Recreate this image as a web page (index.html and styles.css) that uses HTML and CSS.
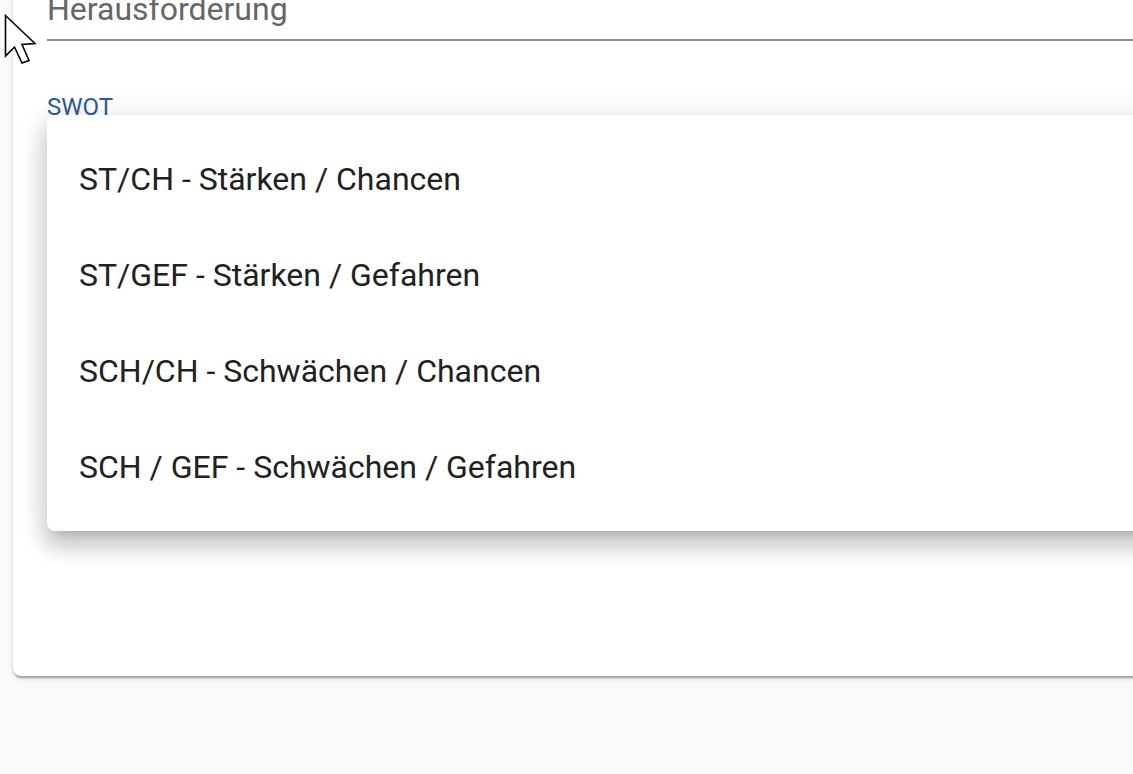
FILE: index.html
```html
<!DOCTYPE html>
<html lang="de">
<head>
<meta charset="utf-8">
<title>SWOT</title>
<link rel="stylesheet" href="styles.css">
</head>
<body>
<div class="card">
  <div class="field">
    <div class="field-input">Herausforderung</div>
  </div>
  <div class="select-field">
    <div class="select-label">SWOT</div>
  </div>
</div>
<ul class="menu">
  <li class="menu-item">ST/CH - Stärken / Chancen</li>
  <li class="menu-item">ST/GEF - Stärken / Gefahren</li>
  <li class="menu-item">SCH/CH - Schwächen / Chancen</li>
  <li class="menu-item">SCH / GEF - Schwächen / Gefahren</li>
</ul>
<svg class="cursor" width="40" height="72" viewBox="0 0 40 72">
  <polygon points="5.5,15.5 5.5,56 14.5,47 22,63 29,60.5 22,44.5 35,43.5" fill="#fff" stroke="#000" stroke-width="1.6" stroke-linejoin="miter"/>
</svg>
</body>
</html>
```
FILE: styles.css
```css
html, body {
  margin: 0;
  padding: 0;
  background: #fafafa;
  font-family: Roboto, "Liberation Sans", Arial, sans-serif;
  overflow: hidden;
}
body {
  width: 1133px;
  height: 774px;
  position: relative;
}
.card {
  margin: -42px -30px 0 13px;
  padding-top: 32px;
  height: 686px;
  background: #fff;
  border-radius: 8px;
  box-shadow: 0 4px 2px -2px rgba(0,0,0,0.2), 0 2px 2px 0 rgba(0,0,0,0.14), 0 2px 6px 0 rgba(0,0,0,0.12);
}
.field {
  padding-left: 34px;
}
.field-input {
  font-size: 32px;
  line-height: 38px;
  color: #666;
  padding-bottom: 11px;
  border-bottom: 2px solid #8a8a8a;
}
.select-field {
  padding-left: 34px;
  margin-top: 54px;
}
.select-label {
  font-size: 24px;
  line-height: 24px;
  color: #2f5a9e;
}
.menu {
  position: absolute;
  left: 47px;
  top: 115px;
  right: -30px;
  margin: 0;
  padding: 16px 0;
  list-style: none;
  background: #fff;
  border-radius: 8px;
  box-shadow: 0 10px 10px -10px rgba(0,0,0,0.2), 0 16px 20px 2px rgba(0,0,0,0.14), 0 6px 28px 4px rgba(0,0,0,0.12);
}
.menu-item {
  height: 96px;
  display: flex;
  align-items: center;
  padding: 0 32px;
  font-size: 32px;
  color: #212121;
}
.cursor {
  position: absolute;
  left: 0;
  top: 0;
  width: 40px;
  height: 72px;
}
```
